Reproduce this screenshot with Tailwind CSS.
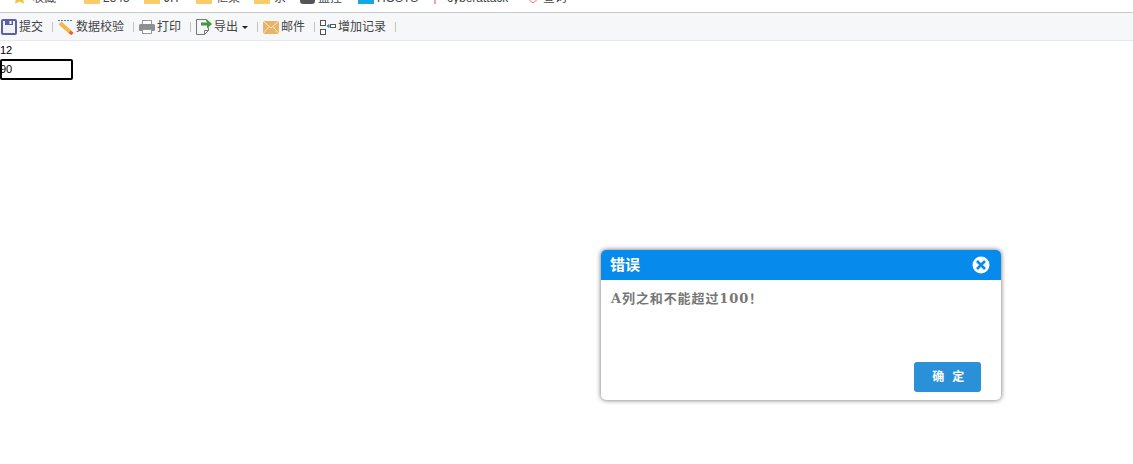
<!DOCTYPE html>
<html lang="en">
<head>
  <meta charset="UTF-8">
  <title>Report</title>
  <script src="https://cdn.jsdelivr.net/npm/@tailwindcss/browser@4"></script>
</head>
<body class="relative h-[464px] w-[1133px] overflow-hidden bg-white font-['Liberation_Sans','Noto_Sans_CJK_SC',sans-serif]">
  <!-- browser bookmarks bar, cut off at the top -->
  <div class="h-[13px] border-b border-[#c9c9c9] bg-white">
    <div class="flex h-[4px] items-end overflow-hidden whitespace-nowrap text-[12px] leading-[12px] text-[#444]">
      <svg class="ml-[12px] shrink-0" width="15" height="14" viewBox="0 0 15 14"><path d="M7.500 0l2.200 4.600 5 .7-3.600 3.500.9 5-4.500-2.400L3 13.800l.9-5L.3 5.300l5-.7z" fill="#f5c044"/></svg>
      <span class="ml-[5px] w-[23px] shrink-0">收藏</span>
      <svg class="ml-[29px] shrink-0" width="16" height="12" viewBox="0 0 16 12"><rect width="16" height="12" rx="1" fill="#fbcb66"/></svg>
      <span class="ml-[3px] w-[25px] shrink-0">2345</span>
      <svg class="ml-[16px] shrink-0" width="16" height="12" viewBox="0 0 16 12"><rect width="16" height="12" rx="1" fill="#fbcb66"/></svg>
      <span class="ml-[4px] w-[16px] shrink-0">JIT</span>
      <svg class="ml-[16px] shrink-0" width="16" height="12" viewBox="0 0 16 12"><rect width="16" height="12" rx="1" fill="#fbcb66"/></svg>
      <span class="ml-[4px] w-[22px] shrink-0">框架</span>
      <svg class="ml-[16px] shrink-0" width="16" height="12" viewBox="0 0 16 12"><rect width="16" height="12" rx="1" fill="#fbcb66"/></svg>
      <span class="ml-[4px] w-[10px] shrink-0">系</span>
      <svg class="ml-[16px] shrink-0" width="15" height="12" viewBox="0 0 15 12"><rect width="15" height="12" rx="3" fill="#555"/><circle cx="7.500" cy="5" r="3" fill="#ccc"/></svg>
      <span class="ml-[3px] w-[25px] shrink-0">监控</span>
      <svg class="ml-[15px] shrink-0" width="16" height="12" viewBox="0 0 16 12"><rect width="16" height="12" fill="#12a9e2"/></svg>
      <span class="ml-[3px] w-[36px] shrink-0">HOSTS</span>
      <svg class="ml-[20px] shrink-0" width="4" height="6" viewBox="0 0 4 6"><path d="M2 0v6" stroke="#d9534f" stroke-width="1"/></svg>
      <span class="ml-[10px] w-[63px] shrink-0">cyberattack</span>
      <svg class="ml-[16px] shrink-0" width="14" height="12" viewBox="0 0 14 12"><path d="M1 1h12v5l-6 5-6-5z" fill="#fff" stroke="#ef7a72"/></svg>
      <span class="ml-[3px] w-[25px] shrink-0">查询</span>
    </div>
  </div>

  <!-- toolbar -->
  <div class="flex h-[28px] items-center border-b border-[#e8e8e8] bg-[#f6f7f9] pt-[1px] text-[12px] leading-[16px] text-[#444]">
    <div class="flex items-center gap-[2px] pl-[1px]">
      <svg width="16" height="16" viewBox="0 0 16 16"><rect x="1" y="1" width="14" height="14" rx="1" fill="#f1f1f8" stroke="#5b5fa8" stroke-width="2"/><rect x="4" y="1" width="8" height="5" fill="#5b5fa8"/><rect x="8.500" y="2" width="2" height="3" fill="#fff"/></svg>
      <span>提交</span>
    </div>
    <span class="ml-[9px] mr-[5px] h-[10px] w-px bg-[#c4c4c4]"></span>
    <div class="flex items-center gap-[2px]">
      <svg width="16" height="16" viewBox="0 0 16 16"><path d="M0 1.500h15" stroke="#3a7bd5" stroke-dasharray="2 1"/><path d="M2 4l9.500 8.500" stroke="#f2b84d" stroke-width="4"/><path d="M11.500 12.500l3 2.500" stroke="#e8663a" stroke-width="3.500"/></svg>
      <span>数据校验</span>
    </div>
    <span class="ml-[9px] mr-[5px] h-[10px] w-px bg-[#c4c4c4]"></span>
    <div class="flex items-center gap-[2px]">
      <svg width="16" height="16" viewBox="0 0 16 16"><rect x="3.500" y="1.500" width="9" height="4" fill="#fff" stroke="#999"/><rect x="0" y="5" width="16" height="7" rx="1.500" fill="#8e8e8e"/><rect x="3.500" y="10.500" width="9" height="4" fill="#fff" stroke="#999"/></svg>
      <span>打印</span>
    </div>
    <span class="ml-[9px] mr-[5px] h-[10px] w-px bg-[#c4c4c4]"></span>
    <div class="flex items-center gap-[2px]">
      <svg width="16" height="16" viewBox="0 0 16 16"><path d="M10.500 2.500v-2h-10v15h8l4-4v-3M8.500 15.500v-4h4" fill="none" stroke="#777"/><path d="M5 3.500h6V.5l5 4.500-5 4.500v-3H5z" fill="#3f9a3f"/></svg>
      <span>导出</span>
      <span class="ml-[2px] h-0 w-0 border-x-[3px] border-t-[3px] border-x-transparent border-t-[#222]"></span>
    </div>
    <span class="ml-[9px] mr-[5px] h-[10px] w-px bg-[#c4c4c4]"></span>
    <div class="flex items-center gap-[2px]">
      <svg width="16" height="13" viewBox="0 0 16 13"><rect width="16" height="13" fill="#e9b368"/><path d="M0 0l8 7 8-7M0 13l6-7.500M16 13l-6-7.500" fill="none" stroke="#fff" stroke-opacity="0.7"/></svg>
      <span>邮件</span>
    </div>
    <span class="ml-[9px] mr-[5px] h-[10px] w-px bg-[#c4c4c4]"></span>
    <div class="flex items-center gap-[2px]">
      <svg width="16" height="15" viewBox="0 0 16 15"><rect x=".5" y=".5" width="5" height="5" fill="#fff" stroke="#555"/><rect x=".5" y="9.500" width="5" height="5" fill="#fff" stroke="#555"/><path d="M10.500 6h-3M9 4.500L7 6l2 1.500z" fill="#3a8fe0" stroke="#3a8fe0"/><rect x="10.500" y="4.500" width="5" height="3" fill="#fff" stroke="#555"/></svg>
      <span>增加记录</span>
    </div>
    <span class="ml-[9px] h-[10px] w-px bg-[#c4c4c4]"></span>
  </div>

  <!-- sheet cells -->
  <div class="h-[18px] pt-[1px] text-[11px] leading-[16px] text-black">12</div>
  <div class="h-[21px] w-[73px] rounded-[2px] border-2 border-black text-[11px] leading-[17px] text-black"><span class="-ml-[2px] block">90</span></div>

  <!-- error dialog over the page -->
  <div class="absolute left-[601px] top-[250px] h-[150px] w-[400px] overflow-hidden rounded-[5px] bg-white shadow-[0_0_5px_rgba(0,0,0,0.6)]">
    <div class="flex h-[30px] items-center justify-between bg-[#068bec] pl-[9px] pr-[11px]">
      <span class="font-['DejaVu_Serif','Noto_Sans_CJK_SC',serif] text-[15px] font-bold text-white">错误</span>
      <svg width="18" height="18" viewBox="0 0 18 18"><circle cx="9" cy="9" r="8.500" fill="#fff"/><path d="M5 5l8 8M13 5l-8 8" stroke="#068bec" stroke-width="2.600"/></svg>
    </div>
    <p class="pl-[10px] pt-[10px] font-['DejaVu_Serif','Noto_Sans_CJK_SC',serif] text-[13px] font-bold leading-[18px] tracking-[0.9px] text-[#777]">A列之和不能超过100！</p>
    <button class="absolute bottom-[8px] right-[20px] h-[30px] w-[67px] rounded-[3px] bg-[#2a90d8] pl-[2px] text-[12px] font-bold tracking-[0.5px] text-white">确&nbsp;&nbsp;定</button>
  </div>
</body>
</html>
